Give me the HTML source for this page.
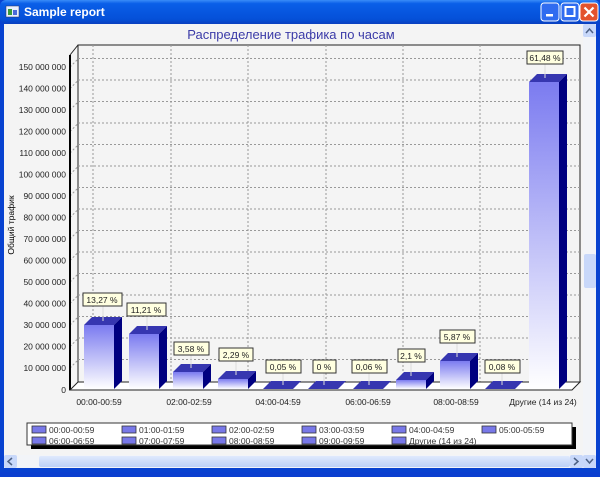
<!DOCTYPE html>
<html><head><meta charset="utf-8"><style>
body{margin:0;width:600px;height:472px;overflow:hidden;background:#0a3fd0;font-family:"Liberation Sans",sans-serif}
</style></head><body>
<svg width="600" height="472" xmlns="http://www.w3.org/2000/svg" font-family="Liberation Sans, sans-serif">
<defs>
<linearGradient id="tb" x1="0" y1="0" x2="0" y2="1"><stop offset="0" stop-color="#3a8cf8"/><stop offset="0.15" stop-color="#0a5fe8"/><stop offset="0.8" stop-color="#0550d8"/><stop offset="1" stop-color="#0a3fbf"/></linearGradient>
<linearGradient id="bar" x1="0" y1="0" x2="0" y2="1"><stop offset="0" stop-color="#7b7bf0"/><stop offset="1" stop-color="#ffffff"/></linearGradient>
<linearGradient id="hs" x1="0" y1="0" x2="0" y2="1"><stop offset="0" stop-color="#dfe9fd"/><stop offset="1" stop-color="#bcd0f7"/></linearGradient>
</defs>
<rect x="0" y="0" width="600" height="472" fill="#0842d0"/>
<rect x="0" y="0" width="600" height="24" fill="url(#tb)" rx="6"/>
<rect x="6" y="6" width="13" height="11" fill="#e8f0ff" stroke="#335" stroke-width="0.5"/>
<rect x="8" y="9" width="4" height="6" fill="#3a9a3a"/><rect x="13" y="10" width="4" height="5" fill="#4a6ad8"/>
<text x="24" y="16" font-size="12" font-weight="bold" fill="#fff">Sample report</text>
<rect x="541" y="3" width="18" height="18" rx="3" fill="#2f6cf0" stroke="#fff"/><rect x="546" y="14" width="7" height="2.5" fill="#fff"/>
<rect x="561" y="3" width="18" height="18" rx="3" fill="#2f6cf0" stroke="#fff"/><rect x="565.5" y="7" width="9" height="9" fill="none" stroke="#fff" stroke-width="2"/>
<rect x="580" y="3" width="18" height="18" rx="3" fill="#e3532d" stroke="#fff"/><path d="M584.5 7.5l9 9M593.5 7.5l-9 9" stroke="#fff" stroke-width="2.2"/>
<rect x="4" y="24" width="592" height="444" fill="#f4f4f4"/>
<rect x="583" y="24" width="13" height="431" fill="#f2f4f8"/>
<rect x="583" y="24" width="13" height="13" fill="#c8d8fa" rx="2"/><path d="M586 33l3.5-4 3.5 4" stroke="#4d6185" fill="none" stroke-width="1.5"/>
<rect x="584" y="254" width="12" height="34" fill="#c8d8fa" rx="2"/>
<rect x="4" y="455" width="592" height="13" fill="#f2f4f8"/>
<rect x="4" y="455" width="13" height="13" fill="#c8d8fa" rx="2"/><path d="M12 458l-4 3.5 4 3.5" stroke="#4d6185" fill="none" stroke-width="1.5"/>
<rect x="39" y="456" width="531" height="11" fill="url(#hs)" rx="2"/>
<rect x="570" y="455" width="13" height="13" fill="#c8d8fa" rx="2"/><path d="M574 458l4 3.5-4 3.5" stroke="#4d6185" fill="none" stroke-width="1.5"/>
<rect x="583" y="455" width="13" height="13" fill="#c8d8fa" rx="2"/><path d="M586 459l3.5 4 3.5-4" stroke="#4d6185" fill="none" stroke-width="1.5"/>
<text x="291" y="39" font-size="13" fill="#3b3ba8" text-anchor="middle">Распределение трафика по часам</text>
<rect x="78" y="45" width="502" height="337" fill="none" stroke="#222" stroke-width="1"/>
<path d="M70 55L78 45" stroke="#222"/>
<g stroke="#999" stroke-dasharray="2,2" stroke-width="1">
<path d="M78 58.5H580M78 80H580M78 101.5H580M78 123H580M78 144.5H580M78 166H580M78 187.5H580M78 209H580M78 230.5H580M78 252H580M78 273.5H580M78 295H580M78 316.5H580M78 338H580M78 359.5H580"/>
<path d="M93 45V382M171 45V382M248 45V382M326 45V382M403 45V382M480 45V382"/>
<path d="M70 67l8-8M70 88.5l8-8M70 110l8-8M70 131.5l8-8M70 153l8-8M70 174.5l8-8M70 196l8-8M70 217.5l8-8M70 239l8-8M70 260.5l8-8M70 282l8-8M70 303.5l8-8M70 325l8-8M70 346.5l8-8M70 368l8-8"/>
</g>
<path d="M70 55V390" stroke="#000" stroke-width="2"/>
<g font-size="8.5" fill="#222" text-anchor="end">
<text x="66" y="70">150 000 000</text><text x="66" y="91.5">140 000 000</text><text x="66" y="113">130 000 000</text><text x="66" y="134.5">120 000 000</text><text x="66" y="156">110 000 000</text><text x="66" y="177.5">100 000 000</text><text x="66" y="199">90 000 000</text><text x="66" y="220.5">80 000 000</text><text x="66" y="242">70 000 000</text><text x="66" y="263.5">60 000 000</text><text x="66" y="285">50 000 000</text><text x="66" y="306.5">40 000 000</text><text x="66" y="328">30 000 000</text><text x="66" y="349.5">20 000 000</text><text x="66" y="371">10 000 000</text><text x="66" y="393">0</text>
</g>
<text transform="translate(14,225) rotate(-90)" font-size="8.5" fill="#000" text-anchor="middle">Общий трафик</text>
<path d="M70 390L78 382H580L572 390Z" fill="#fff" stroke="#222"/>
<g stroke="none">
<path d="M84 325h30v64h-30z" fill="url(#bar)"/><path d="M84 325l8-8h30l-8 8z" fill="#3636b0"/><path d="M114 325l8-8v64l-8 8z" fill="#000080"/>
<path d="M129 334h30v55h-30z" fill="url(#bar)"/><path d="M129 334l8-8h30l-8 8z" fill="#3636b0"/><path d="M159 334l8-8v55l-8 8z" fill="#000080"/>
<path d="M173 372h30v17h-30z" fill="url(#bar)"/><path d="M173 372l8-8h30l-8 8z" fill="#3636b0"/><path d="M203 372l8-8v17l-8 8z" fill="#000080"/>
<path d="M218 379h30v10h-30z" fill="url(#bar)"/><path d="M218 379l8-8h30l-8 8z" fill="#3636b0"/><path d="M248 379l8-8v10l-8 8z" fill="#000080"/>
<path d="M263 389l8-8h30l-8 8z" fill="#3636b0"/>
<path d="M308 389l8-8h30l-8 8z" fill="#3636b0"/>
<path d="M353 389l8-8h30l-8 8z" fill="#3636b0"/>
<path d="M396 380h30v9h-30z" fill="url(#bar)"/><path d="M396 380l8-8h30l-8 8z" fill="#3636b0"/><path d="M426 380l8-8v9l-8 8z" fill="#000080"/>
<path d="M440 361h30v28h-30z" fill="url(#bar)"/><path d="M440 361l8-8h30l-8 8z" fill="#3636b0"/><path d="M470 361l8-8v28l-8 8z" fill="#000080"/>
<path d="M485 389l8-8h30l-8 8z" fill="#3636b0"/>
<path d="M529 82h30v307h-30z" fill="url(#bar)"/><path d="M529 82l8-8h30l-8 8z" fill="#3636b0"/><path d="M559 82l8-8v307l-8 8z" fill="#000080"/>
</g>
<g stroke="#ddd" stroke-width="1">
<path d="M103 306v15M147 316v14M191 355v13M236 361v14M283 373v12M324 373v12M369 373v12M411 362v14M457 343v14M502 373v12M545 64v14"/>
</g>
<g font-size="8.5" fill="#222" text-anchor="middle">
<g fill="#ffffe0" stroke="#333" stroke-width="1">
<rect x="83" y="293" width="39" height="13"/><rect x="127" y="303" width="39" height="13"/><rect x="174" y="342" width="35" height="13"/><rect x="219" y="348" width="34" height="13"/><rect x="266" y="360" width="35" height="13"/><rect x="313" y="360" width="23" height="13"/><rect x="352" y="360" width="35" height="13"/><rect x="398" y="349" width="27" height="13"/><rect x="440" y="330" width="35" height="13"/><rect x="485" y="360" width="35" height="13"/><rect x="527" y="51" width="36" height="13"/>
</g>
<text x="102" y="303">13,27 %</text><text x="146" y="313">11,21 %</text><text x="191" y="352">3,58 %</text><text x="236" y="358">2,29 %</text><text x="283" y="370">0,05 %</text><text x="324" y="370">0 %</text><text x="369" y="370">0,06 %</text><text x="411" y="359">2,1 %</text><text x="457" y="340">5,87 %</text><text x="502" y="370">0,08 %</text><text x="545" y="61">61,48 %</text>
<text x="99" y="405">00:00-00:59</text><text x="189" y="405">02:00-02:59</text><text x="278" y="405">04:00-04:59</text><text x="368" y="405">06:00-06:59</text><text x="456" y="405">08:00-08:59</text><text x="543" y="405">Другие (14 из 24)</text>
</g>
<rect x="31" y="427" width="545" height="22" fill="#000"/>
<rect x="27" y="423" width="545" height="22" fill="#fff" stroke="#333"/>
<g fill="#7878e8" stroke="#333" stroke-width="0.8">
<rect x="32" y="426" width="14" height="7"/><rect x="122" y="426" width="14" height="7"/><rect x="212" y="426" width="14" height="7"/><rect x="302" y="426" width="14" height="7"/><rect x="392" y="426" width="14" height="7"/><rect x="482" y="426" width="14" height="7"/>
<rect x="32" y="437" width="14" height="7"/><rect x="122" y="437" width="14" height="7"/><rect x="212" y="437" width="14" height="7"/><rect x="302" y="437" width="14" height="7"/><rect x="392" y="437" width="14" height="7"/>
</g>
<g font-size="8.5" fill="#333">
<text x="49" y="433">00:00-00:59</text><text x="139" y="433">01:00-01:59</text><text x="229" y="433">02:00-02:59</text><text x="319" y="433">03:00-03:59</text><text x="409" y="433">04:00-04:59</text><text x="499" y="433">05:00-05:59</text>
<text x="49" y="444">06:00-06:59</text><text x="139" y="444">07:00-07:59</text><text x="229" y="444">08:00-08:59</text><text x="319" y="444">09:00-09:59</text><text x="409" y="444">Другие (14 из 24)</text>
</g>
</svg>
</body></html>
